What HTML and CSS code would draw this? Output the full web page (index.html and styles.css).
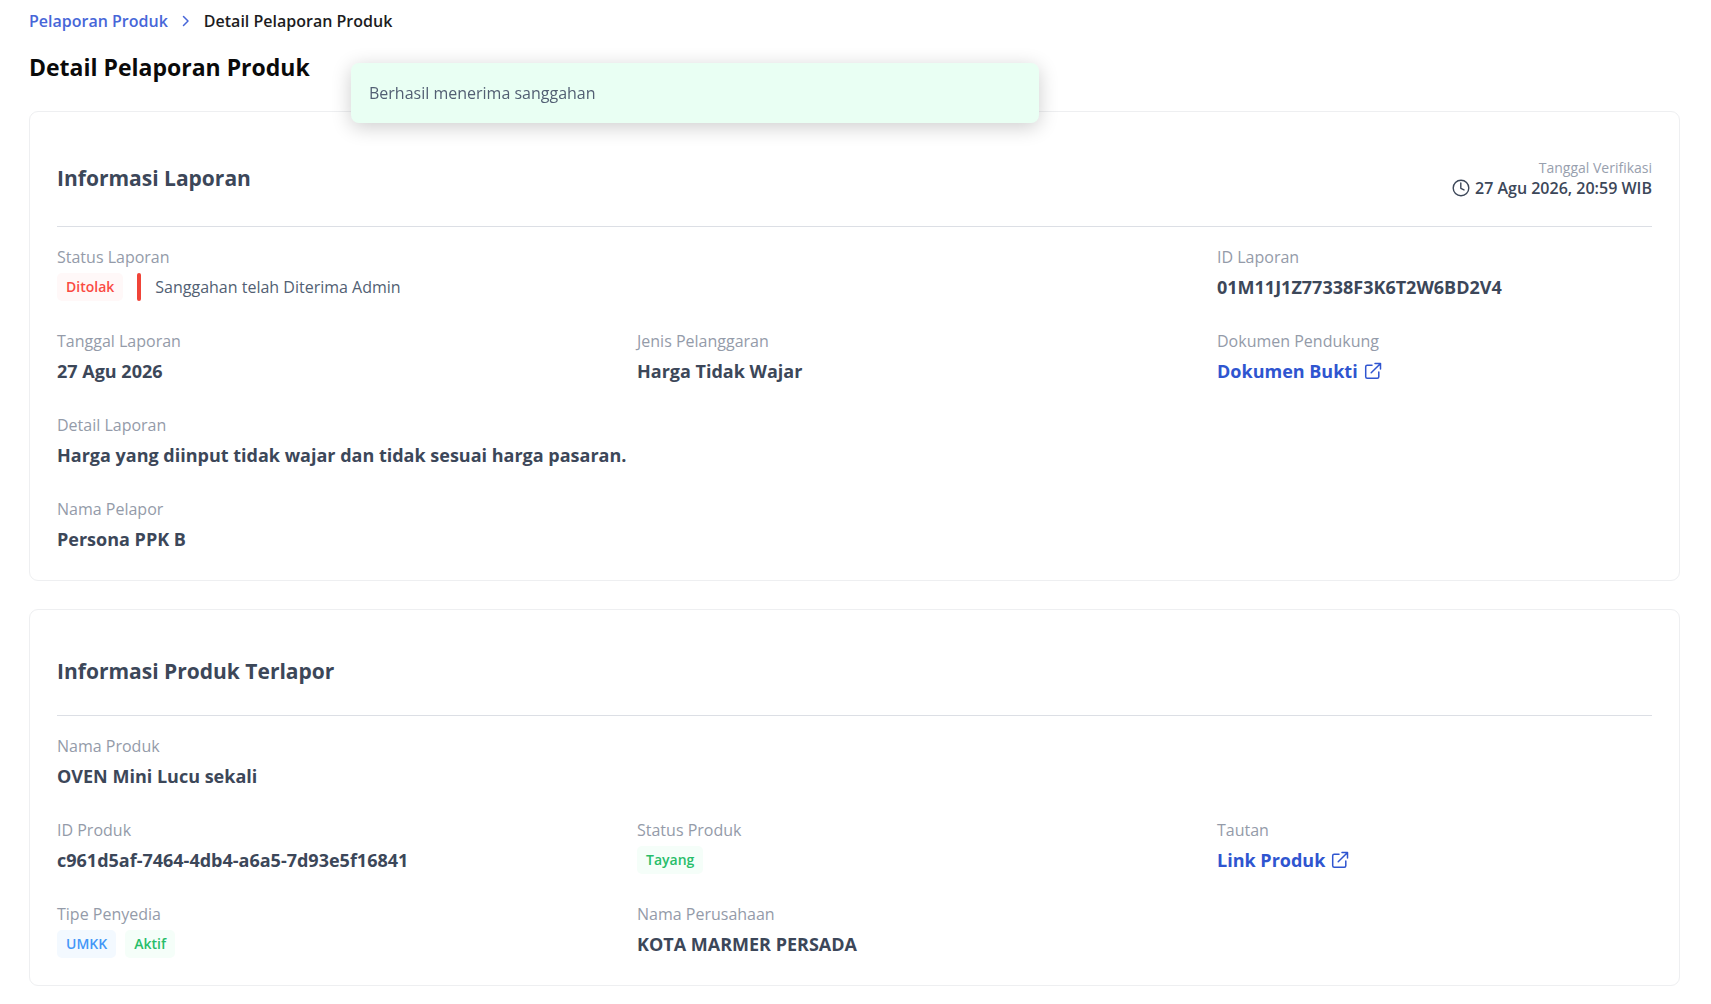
FILE: index.html
```html
<!DOCTYPE html>
<html lang="id">
<head>
  <meta charset="UTF-8" />
  <meta name="viewport" content="width=device-width, initial-scale=1" />
  <title>Detail Pelaporan Produk</title>
  <link rel="stylesheet" href="styles.css">
</head>
<body>

  <!-- Toast -->
  <div class="toast" role="status">Berhasil menerima sanggahan</div>

  <nav class="breadcrumb">
    <a href="#">Pelaporan Produk</a>
    <svg class="chevron" viewBox="0 0 8 12" aria-hidden="true"><path d="M1.5 1.5 6 6l-4.500 4.500" /></svg>
    <span>Detail Pelaporan Produk</span>
  </nav>

  <main>
    <h1>Detail Pelaporan Produk</h1>

    <!-- Informasi Laporan -->
    <section class="card">
      <div class="card-header">
        <h2>Informasi Laporan</h2>
        <div class="verified">
          <div class="verified-label">Tanggal Verifikasi</div>
          <div class="verified-date">
            <svg class="clock" viewBox="0 0 18 18" aria-hidden="true">
              <circle cx="9" cy="9" r="7.800" />
              <path d="M8.800 4v5.300l3.200 1.600" />
            </svg>
            27 Agu 2026, 20:59 WIB
          </div>
        </div>
      </div>

      <div class="info-grid">
        <div class="field wide">
          <div class="label">Status Laporan</div>
          <div class="status">
            <span class="badge red">Ditolak</span>
            <span class="bar"></span>
            <span class="note">Sanggahan telah Diterima Admin</span>
          </div>
        </div>
        <div class="field">
          <div class="label">ID Laporan</div>
          <div class="value">01M11J1Z77338F3K6T2W6BD2V4</div>
        </div>
        <div class="field">
          <div class="label">Tanggal Laporan</div>
          <div class="value">27 Agu 2026</div>
        </div>
        <div class="field">
          <div class="label">Jenis Pelanggaran</div>
          <div class="value">Harga Tidak Wajar</div>
        </div>
        <div class="field">
          <div class="label">Dokumen Pendukung</div>
          <a class="value link" href="#">Dokumen Bukti
            <svg class="external" viewBox="0 0 18 18" aria-hidden="true"><path d="M8 3.200H3.200a1.500 1.500 0 0 0-1.500 1.500v10.100a1.500 1.500 0 0 0 1.500 1.500h10.100a1.500 1.500 0 0 0 1.500-1.500V10M11 1.500h5.500V7M16.300 1.700 7.200 10.800" /></svg>
          </a>
        </div>
        <div class="field full">
          <div class="label">Detail Laporan</div>
          <div class="value">Harga yang diinput tidak wajar dan tidak sesuai harga pasaran.</div>
        </div>
        <div class="field full">
          <div class="label">Nama Pelapor</div>
          <div class="value">Persona PPK B</div>
        </div>
      </div>
    </section>

    <!-- Informasi Produk Terlapor -->
    <section class="card">
      <div class="card-header">
        <h2>Informasi Produk Terlapor</h2>
      </div>

      <div class="info-grid">
        <div class="field full">
          <div class="label">Nama Produk</div>
          <div class="value">OVEN Mini Lucu sekali</div>
        </div>
        <div class="field">
          <div class="label">ID Produk</div>
          <div class="value">c961d5af-7464-4db4-a6a5-7d93e5f16841</div>
        </div>
        <div class="field">
          <div class="label">Status Produk</div>
          <div class="status">
            <span class="badge green">Tayang</span>
          </div>
        </div>
        <div class="field">
          <div class="label">Tautan</div>
          <a class="value link" href="#">Link Produk
            <svg class="external" viewBox="0 0 18 18" aria-hidden="true"><path d="M8 3.200H3.200a1.500 1.500 0 0 0-1.500 1.500v10.100a1.500 1.500 0 0 0 1.500 1.500h10.100a1.500 1.500 0 0 0 1.500-1.500V10M11 1.500h5.500V7M16.300 1.700 7.200 10.800" /></svg>
          </a>
        </div>
        <div class="field">
          <div class="label">Tipe Penyedia</div>
          <div class="status">
            <span class="badge blue">UMKK</span>
            <span class="badge green">Aktif</span>
          </div>
        </div>
        <div class="field">
          <div class="label">Nama Perusahaan</div>
          <div class="value">KOTA MARMER PERSADA</div>
        </div>
      </div>
    </section>
  </main>

</body>
</html>
```
FILE: styles.css
```css
* {
  box-sizing: border-box;
}

body {
  margin: 0;
  padding: 8px 31px 16px 29px;
  font-family: "Open Sans", sans-serif;
  font-size: 16px;
  line-height: 24px;
  color: #3c4759;
  background: #fff;
}

svg {
  fill: none;
  stroke: currentColor;
  stroke-linecap: round;
  stroke-linejoin: round;
  flex-shrink: 0;
}

a {
  color: #2f55d0;
  text-decoration: none;
}

h1,
h2 {
  margin: 0;
  font-weight: 700;
}

/* Toast */
.toast {
  position: fixed;
  top: 63px;
  left: 351px;
  width: 688px;
  padding: 18px;
  border-radius: 8px;
  background: #e9fff3;
  color: #525f73;
  box-shadow: 0 4px 20px rgba(0, 0, 0, 0.2);
}

/* Breadcrumb */
.breadcrumb {
  display: flex;
  align-items: center;
  gap: 14px;
  font-weight: 600;
  line-height: 26px;
}

.breadcrumb a {
  color: #4766d8;
}

.breadcrumb span {
  color: #1c1c1e;
}

.chevron {
  width: 8px;
  height: 12px;
  stroke-width: 1.5;
  color: #4766d8;
}

h1 {
  margin: 17px 0 28px;
  font-size: 23px;
  line-height: 32px;
  color: #0a0a0a;
}

/* Cards */
.card {
  padding: 46px 27px 27px;
  border: 1px solid #eeeff1;
  border-radius: 9px;
}

.card + .card {
  margin-top: 28px;
}

.card-header {
  display: flex;
  align-items: center;
  justify-content: space-between;
  padding-bottom: 28px;
  border-bottom: 1px solid #dcdfe5;
}

h2 {
  font-size: 21px;
  line-height: 31px;
}

.verified {
  text-align: right;
  line-height: 20px;
}

.verified-label {
  font-size: 14px;
  color: #98a0ae;
}

.verified-date {
  display: flex;
  align-items: center;
  gap: 5px;
  font-weight: 600;
}

.clock {
  width: 18px;
  height: 18px;
  stroke-width: 1.4;
}

/* Fields */
.info-grid {
  display: grid;
  grid-template-columns: 4fr 4fr 3fr;
  row-gap: 28px;
  padding-top: 18px;
}

.wide {
  grid-column: span 2;
}

.full {
  grid-column: 1 / -1;
}

.label {
  margin-bottom: 3px;
  line-height: 25px;
  color: #949ba9;
}

.value {
  font-size: 18px;
  font-weight: 700;
  line-height: 28px;
}

.link {
  display: flex;
  align-items: center;
  gap: 6px;
}

.external {
  width: 18px;
  height: 18px;
  stroke-width: 1.5;
}

.status {
  display: flex;
  align-items: center;
}

.badge {
  padding: 0 9px;
  border-radius: 5px;
  font-size: 14px;
  font-weight: 600;
  line-height: 28px;
}

.badge + .badge {
  margin-left: 9px;
}

.red {
  background: #fff8f8;
  color: #fa4b43;
}

.green {
  background: #f5fef9;
  color: #27bd69;
}

.blue {
  background: #f3f9ff;
  color: #4497f7;
}

.bar {
  width: 4px;
  height: 28px;
  margin: 0 14px;
  border-radius: 2px;
  background: #f04438;
}

.note {
  color: #525f73;
}
```
